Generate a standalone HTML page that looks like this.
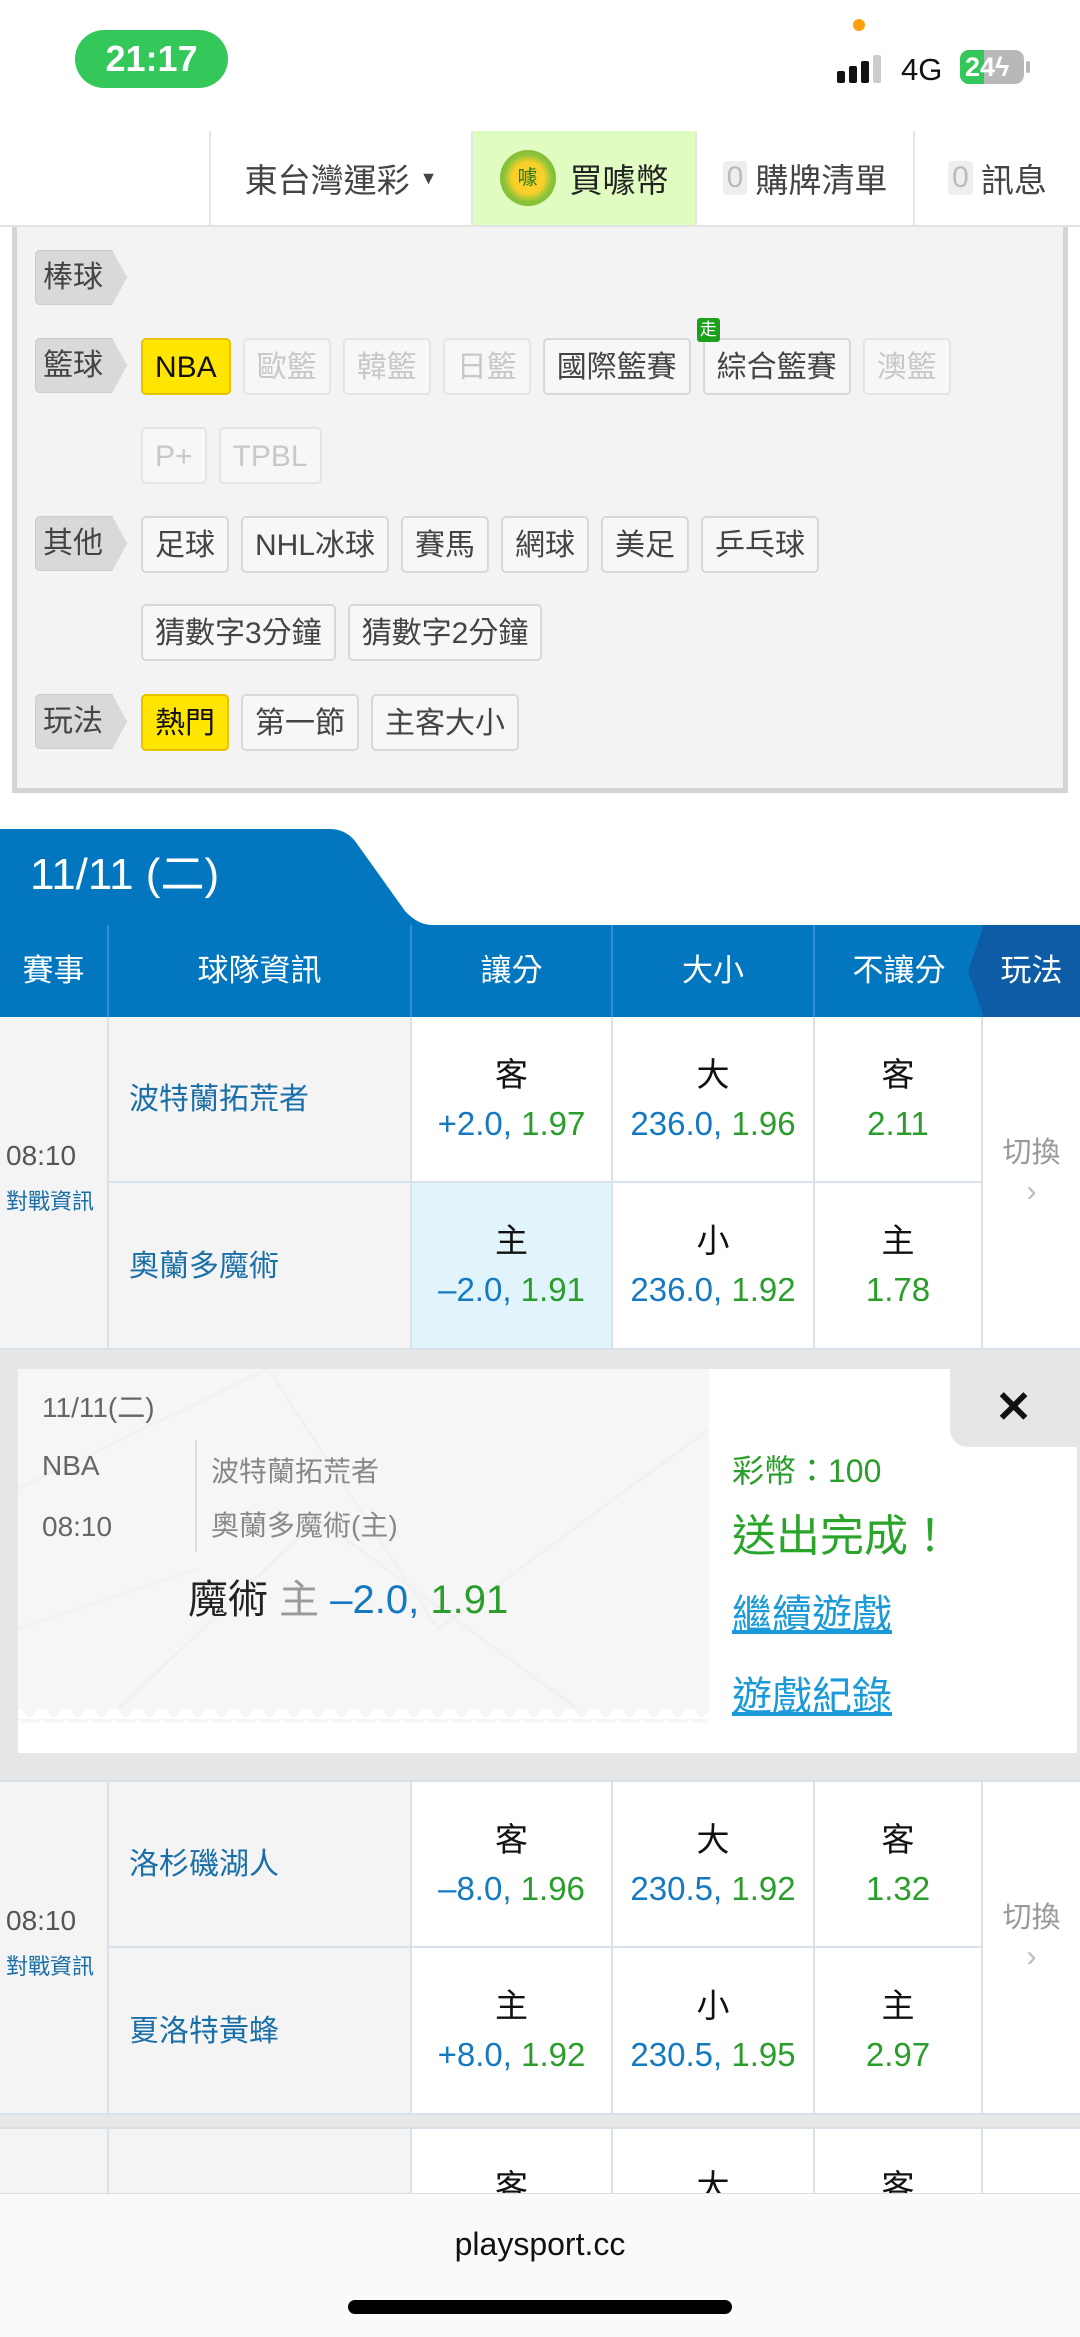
<!DOCTYPE html>
<html><head><meta charset="utf-8">
<style>
*{margin:0;padding:0;box-sizing:border-box}
body{width:1080px;height:2337px;position:relative;overflow:hidden;background:#fff;font-family:"Liberation Sans","Noto Sans CJK TC",sans-serif;color:#333}
.a{position:absolute}
.nav{top:131px;height:96px;left:0;width:1080px;border-bottom:2px solid #e2e2e2;background:#fff}
.ni{position:absolute;top:0;height:94px;display:flex;align-items:center;justify-content:center;font-size:33px;color:#444;border-left:2px solid #e6e6e6}
.z{display:inline-block;background:#eee;color:#bbb;border-radius:4px;padding:0 4px;margin-right:8px;font-size:30px}
.panel{left:12px;top:227px;width:1056px;height:566px;background:#f3f3f3;border:5px solid #d4d4d4;border-top:none}
.row{position:absolute;left:0;display:flex;gap:12px}
.lab{position:absolute;left:18px;width:92px;height:55px;background:#d9d9d9;clip-path:polygon(0 0,84% 0,100% 50%,84% 100%,0 100%);font-size:30px;color:#444;line-height:55px;padding-left:8px;border-radius:5px;box-shadow:inset 0 0 0 1px #ccc}
.c{height:57px;line-height:55px;padding:0 12px;font-size:30px;border:2px solid #d8d8d8;border-radius:5px;background:#f7f7f7;color:#444;white-space:nowrap;position:relative}
.c.y{background:#ffe500;border-color:#e6c200;color:#111}
.c.d{color:#c8c8c8;border-color:#e4e4e4}
.hd{top:925px;height:92px;left:0;width:1080px;background:#0277c0;color:#fff;font-size:31px}
.hc{position:absolute;top:0;height:92px;line-height:92px;text-align:center;border-right:2px solid #2f8fd0}
.cell{position:absolute;border-right:2px solid #d9e2ea;border-bottom:2px solid #d9e2ea;text-align:center}
.k{font-size:33px;color:#111;line-height:40px}
.n{font-size:33px;line-height:42px;margin-top:8px;white-space:nowrap}
.b{color:#1479c0}.g{color:#2a9d2a}
.team{font-size:30px;color:#1a6fa8;text-align:left;padding-left:20px}
</style></head><body>
<div class="a" style="left:75px;top:30px;width:153px;height:58px;border-radius:29px;background:#34c759;color:#fff;font-size:36px;font-weight:bold;text-align:center;line-height:58px">21:17</div>
<div class="a" style="left:853px;top:19px;width:12px;height:12px;border-radius:6px;background:#ff9f0a"></div>
<div class="a" style="left:837px;top:71px;width:8px;height:12px;background:#111;border-radius:2px"></div>
<div class="a" style="left:849px;top:66px;width:8px;height:17px;background:#111;border-radius:2px"></div>
<div class="a" style="left:861px;top:61px;width:8px;height:22px;background:#111;border-radius:2px"></div>
<div class="a" style="left:873px;top:55px;width:8px;height:28px;background:#ccc;border-radius:2px"></div>
<div class="a" style="left:901px;top:52px;font-size:31px;color:#111">4G</div>
<div class="a" style="left:960px;top:50px;width:64px;height:34px;border-radius:9px;background:#b8b8b8;overflow:hidden"><div style="width:24px;height:34px;background:#34c759"></div></div>
<div class="a" style="left:960px;top:50px;width:64px;height:34px;color:#fff;font-weight:bold;font-size:27px;line-height:34px;padding-left:5px">24ϟ</div>
<div class="a" style="left:1026px;top:61px;width:4px;height:12px;background:#b8b8b8;border-radius:2px"></div>
<div class="a nav">
<div class="ni" style="left:209px;width:262px">東台灣運彩<span style="font-size:18px;margin-left:10px">▼</span></div>
<div class="ni" style="left:471px;width:224px;background:#e0fcc0;color:#222"><span style="display:inline-block;width:56px;height:56px;border-radius:28px;background:radial-gradient(circle,#f9d02a 40%,#8cc43a 60%,#6fa82a);margin-right:14px;font-size:20px;line-height:56px;text-align:center;color:#2a7a1a">噱</span>買噱幣</div>
<div class="ni" style="left:695px;width:218px"><span class="z">0</span>購牌清單</div>
<div class="ni" style="left:913px;width:167px"><span class="z">0</span>訊息</div>
</div>
<div class="a panel">
<div class="lab" style="top:23px">棒球</div>
<div class="lab" style="top:111px">籃球</div>
<div class="row" style="left:124px;top:111px"><div class="c y">NBA</div><div class="c d">歐籃</div><div class="c d">韓籃</div><div class="c d">日籃</div><div class="c">國際籃賽</div><div class="c">綜合籃賽<span style="position:absolute;left:-8px;top:-22px;background:#1aa01a;color:#fff;font-size:17px;line-height:24px;padding:0 3px;border-radius:3px">走</span></div><div class="c d">澳籃</div></div>
<div class="row" style="left:124px;top:200px"><div class="c d">P+</div><div class="c d">TPBL</div></div>
<div class="lab" style="top:289px">其他</div>
<div class="row" style="left:124px;top:289px"><div class="c">足球</div><div class="c">NHL冰球</div><div class="c">賽馬</div><div class="c">網球</div><div class="c">美足</div><div class="c">乒乓球</div></div>
<div class="row" style="left:124px;top:377px"><div class="c">猜數字3分鐘</div><div class="c">猜數字2分鐘</div></div>
<div class="lab" style="top:467px">玩法</div>
<div class="row" style="left:124px;top:467px"><div class="c y">熱門</div><div class="c">第一節</div><div class="c">主客大小</div></div>
</div>
<svg class="a" style="left:0;top:829px" width="1080" height="97"><path d="M0 0H330Q345 0 355 12L405 82Q418 96 432 96H1080V97H0Z" fill="#0277c0"/></svg>
<div class="a" style="left:30px;top:840px;color:#fff;font-size:44px;line-height:70px">11/11 (二)</div>
<div class="a hd">
<div class="hc" style="left:0;width:109px">賽事</div>
<div class="hc" style="left:109px;width:303px">球隊資訊</div>
<div class="hc" style="left:412px;width:201px">讓分</div>
<div class="hc" style="left:613px;width:202px">大小</div>
<div class="hc" style="left:815px;width:168px;border:none">不讓分</div>
<div class="hc" style="left:983px;width:97px;background:#0d5ca5;border:none">玩法</div>
<svg class="a" style="left:968px;top:0" width="16" height="92"><path d="M16 0V92L0 46Z" fill="#0d5ca5"/></svg>
</div>
<div class="cell" style="left:0;top:1017px;width:109px;height:333px;background:#f4f4f4;text-align:left;padding:123px 0 0 6px"><div style="font-size:28px;color:#555">08:10</div><div style="font-size:22px;color:#1a6fa8;margin-top:12px">對戰資訊</div></div>
<div class="cell team" style="left:109px;top:1017px;width:303px;height:166px;background:#f4f4f4;line-height:166px">波特蘭拓荒者</div>
<div class="cell team" style="left:109px;top:1183px;width:303px;height:167px;background:#f4f4f4;line-height:167px">奧蘭多魔術</div>
<div class="cell" style="left:412px;top:1017px;width:201px;height:166px;padding-top:38px"><div class="k">客</div><div class="n"><span class="b">+2.0,</span> <span class="g">1.97</span></div></div>
<div class="cell" style="left:613px;top:1017px;width:202px;height:166px;padding-top:38px"><div class="k">大</div><div class="n"><span class="b">236.0,</span> <span class="g">1.96</span></div></div>
<div class="cell" style="left:815px;top:1017px;width:168px;height:166px;padding-top:38px"><div class="k">客</div><div class="n g">2.11</div></div>
<div class="cell" style="left:412px;top:1183px;width:201px;height:167px;padding-top:38px;background:#e1f4fc"><div class="k">主</div><div class="n"><span class="b">–2.0,</span> <span class="g">1.91</span></div></div>
<div class="cell" style="left:613px;top:1183px;width:202px;height:167px;padding-top:38px"><div class="k">小</div><div class="n"><span class="b">236.0,</span> <span class="g">1.92</span></div></div>
<div class="cell" style="left:815px;top:1183px;width:168px;height:167px;padding-top:38px"><div class="k">主</div><div class="n g">1.78</div></div>
<div class="cell" style="left:983px;top:1017px;width:97px;height:333px;border-right:none;color:#999;font-size:29px;padding-top:112px">切換<div style="font-size:30px;color:#bbb;margin-top:4px">›</div></div>
<div class="a" style="left:0;top:1350px;width:1080px;height:430px;background:#e6e6e6"></div>
<div class="a" style="left:18px;top:1369px;width:1059px;height:384px;background:#fff"></div>
<svg class="a" style="left:18px;top:1369px" width="691" height="384"><defs><pattern id="zz" width="24" height="14" patternUnits="userSpaceOnUse"><path d="M0 0L12 14L24 0Z" fill="#f6f6f6"/></pattern></defs><rect width="691" height="340" fill="#f6f6f6"/><path d="M0 120L250 0L420 260L691 60M100 340L300 150L560 340M0 260L180 200" stroke="#f1f1f1" stroke-width="3" fill="none"/><rect y="340" width="691" height="14" fill="url(#zz)"/></svg>
<div class="a" style="left:950px;top:1369px;width:127px;height:78px;background:#e6e6e6;border-bottom-left-radius:18px;font-size:44px;color:#111;text-align:center;line-height:78px;font-weight:bold">✕</div>
<div class="a" style="left:42px;top:1386px;font-size:28px;color:#666">11/11(二)</div>
<div class="a" style="left:42px;top:1450px;font-size:28px;color:#666">NBA</div>
<div class="a" style="left:42px;top:1511px;font-size:28px;color:#666">08:10</div>
<div class="a" style="left:195px;top:1440px;width:2px;height:112px;background:#ddd"></div>
<div class="a" style="left:211px;top:1450px;font-size:28px;color:#888">波特蘭拓荒者</div>
<div class="a" style="left:211px;top:1504px;font-size:28px;color:#888">奧蘭多魔術(主)</div>
<div class="a" style="left:188px;top:1567px;font-size:40px;white-space:nowrap"><span style="color:#222">魔術</span> <span style="color:#999">主</span> <span class="b">–2.0,</span> <span class="g">1.91</span></div>
<div class="a" style="left:732px;top:1446px;font-size:32px;color:#2a9d2a">彩幣：100</div>
<div class="a" style="left:732px;top:1500px;font-size:44px;color:#2aa52a">送出完成！</div>
<div class="a" style="left:732px;top:1582px;font-size:40px;color:#1a9ad8;text-decoration:underline">繼續遊戲</div>
<div class="a" style="left:732px;top:1664px;font-size:40px;color:#1a9ad8;text-decoration:underline">遊戲紀錄</div>
<div class="a" style="left:0;top:1780px;width:1080px;height:2px;background:#d9e2ea"></div>
<div class="cell" style="left:0;top:1782px;width:109px;height:333px;background:#f4f4f4;text-align:left;padding:123px 0 0 6px"><div style="font-size:28px;color:#555">08:10</div><div style="font-size:22px;color:#1a6fa8;margin-top:12px">對戰資訊</div></div>
<div class="cell team" style="left:109px;top:1782px;width:303px;height:166px;background:#f4f4f4;line-height:166px">洛杉磯湖人</div>
<div class="cell team" style="left:109px;top:1948px;width:303px;height:167px;background:#f4f4f4;line-height:167px">夏洛特黃蜂</div>
<div class="cell" style="left:412px;top:1782px;width:201px;height:166px;padding-top:38px"><div class="k">客</div><div class="n"><span class="b">–8.0,</span> <span class="g">1.96</span></div></div>
<div class="cell" style="left:613px;top:1782px;width:202px;height:166px;padding-top:38px"><div class="k">大</div><div class="n"><span class="b">230.5,</span> <span class="g">1.92</span></div></div>
<div class="cell" style="left:815px;top:1782px;width:168px;height:166px;padding-top:38px"><div class="k">客</div><div class="n g">1.32</div></div>
<div class="cell" style="left:412px;top:1948px;width:201px;height:167px;padding-top:38px"><div class="k">主</div><div class="n"><span class="b">+8.0,</span> <span class="g">1.92</span></div></div>
<div class="cell" style="left:613px;top:1948px;width:202px;height:167px;padding-top:38px"><div class="k">小</div><div class="n"><span class="b">230.5,</span> <span class="g">1.95</span></div></div>
<div class="cell" style="left:815px;top:1948px;width:168px;height:167px;padding-top:38px"><div class="k">主</div><div class="n g">2.97</div></div>
<div class="cell" style="left:983px;top:1782px;width:97px;height:333px;border-right:none;color:#999;font-size:29px;padding-top:112px">切換<div style="font-size:30px;color:#bbb;margin-top:4px">›</div></div>
<div class="a" style="left:0;top:2115px;width:1080px;height:14px;background:#e8e8e8;border-bottom:2px solid #d9e2ea"></div>
<div class="cell" style="left:0;top:2129px;width:109px;height:80px;background:#f4f4f4"></div>
<div class="cell" style="left:109px;top:2129px;width:303px;height:80px;background:#f4f4f4"></div>
<div class="cell" style="left:412px;top:2129px;width:201px;height:80px;padding-top:38px;overflow:hidden"><div class="k">客</div></div>
<div class="cell" style="left:613px;top:2129px;width:202px;height:80px;padding-top:38px;overflow:hidden"><div class="k">大</div></div>
<div class="cell" style="left:815px;top:2129px;width:168px;height:80px;padding-top:38px;overflow:hidden"><div class="k">客</div></div>
<div class="a" style="left:0;top:2193px;width:1080px;height:144px;background:#fafafa;border-top:1px solid #ddd"></div>
<div class="a" style="left:0;top:2226px;width:1080px;text-align:center;font-size:32px;color:#111">playsport.cc</div>
<div class="a" style="left:348px;top:2300px;width:384px;height:14px;border-radius:7px;background:#000"></div>
</body></html>
